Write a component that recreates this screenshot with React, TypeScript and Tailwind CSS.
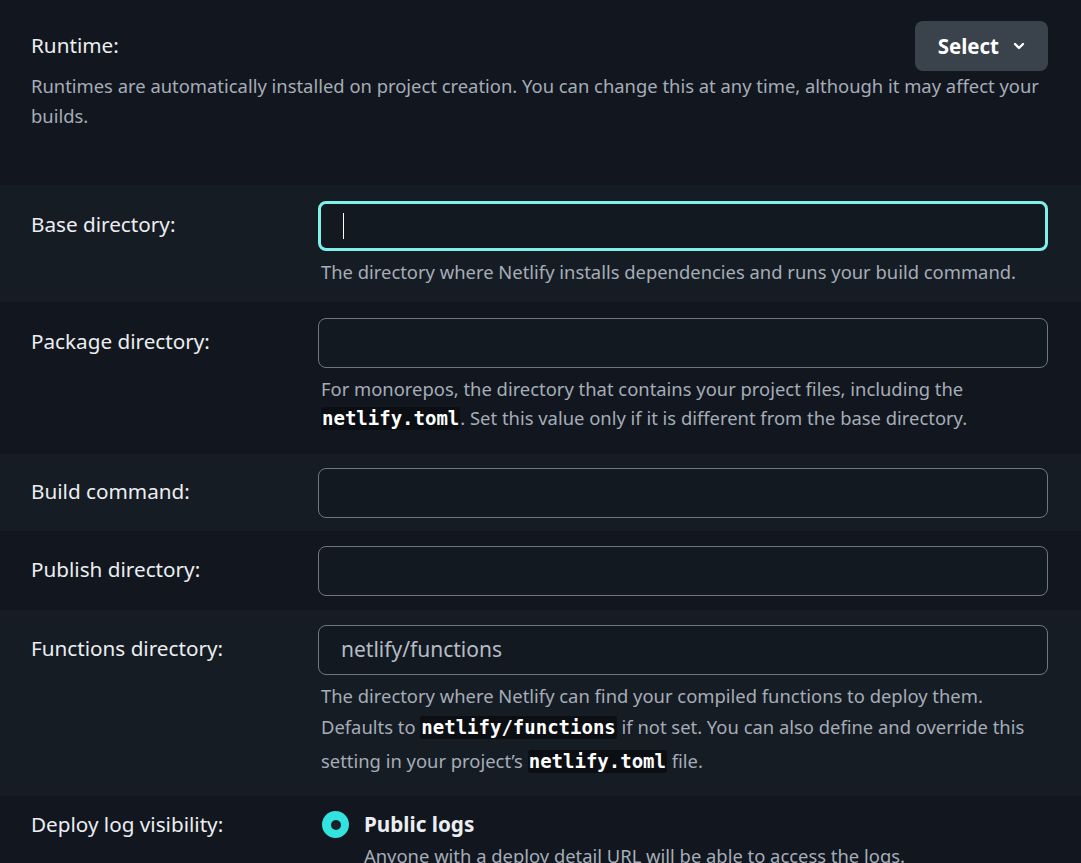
import { ChevronDown } from "lucide-react";
import type { ReactNode } from "react";

const SANS = "font-['Noto_Sans','Open_Sans',sans-serif]";

function Code({ children }: { children: ReactNode }) {
  return (
    <code className="inline-block rounded-[3px] bg-[#0b0e12] px-[1px] font-['DejaVu_Sans_Mono',monospace] text-[19px] font-bold leading-[23px] text-white">
      {children}
    </code>
  );
}

function Field({
  label,
  value,
  focused,
  hint,
  tinted,
  className,
}: {
  label: string;
  value?: string;
  focused?: boolean;
  hint?: ReactNode;
  tinted?: boolean;
  className: string;
}) {
  return (
    <div className={`grid grid-cols-[287px_730px] pl-[31px] ${tinted ? "bg-[#161c24]" : "bg-[#12171f]"} ${className}`}>
      <div className="text-[20.7px] leading-[46px] text-[#eceef1]">{label}</div>
      <div>
        <div
          className={`flex h-[50px] items-center rounded-[8px] bg-[#131920] pl-[22px] ${
            focused ? "border-[3px] border-[#7ff0ea] pl-[20px]" : "border border-[#6e7782]"
          }`}
        >
          {focused && <span className="h-[26px] w-[1px] bg-white" />}
          {value && <span className="text-[21px] text-[#b5bcc5]">{value}</span>}
        </div>
        {hint}
      </div>
    </div>
  );
}

const hintCls = "pl-[3px] text-[18.4px] text-[#a5adb7]";

export default function App() {
  return (
    <div className={`min-h-[863px] w-[1081px] overflow-hidden bg-[#12171f] ${SANS}`}>
      {/* Runtime */}
      <section className="pl-[31px] pr-[33px] pt-[21px] pb-[54px]">
        <div className="flex items-center justify-between">
          <span className="text-[20.7px] text-[#eceef1]">Runtime:</span>
          <button className="flex h-[50px] items-center gap-[12px] rounded-[8px] bg-[#3a424c] pl-[23px] pr-[21px] text-[20.5px] font-bold text-white">
            Select
            <ChevronDown size={16} strokeWidth={3.5} />
          </button>
        </div>
        <p className="text-[18.4px] leading-[30px] text-[#a5adb7]">
          Runtimes are automatically installed on project creation. You can change this at any time, although it may affect your
          <br />
          builds.
        </p>
      </section>

      <Field
        tinted
        focused
        label="Base directory:"
        className="pt-[16px] pb-[15px]"
        hint={
          <p className={`mt-[6px] leading-[30px] ${hintCls}`}>
            The directory where Netlify installs dependencies and runs your build command.
          </p>
        }
      />
      <Field
        label="Package directory:"
        className="pt-[16px] pb-[22px]"
        hint={
          <p className={`mt-[6px] leading-[29px] ${hintCls}`}>
            For monorepos, the directory that contains your project files, including the
            <br />
            <Code>netlify.toml</Code>. Set this value only if it is different from the base directory.
          </p>
        }
      />
      <Field tinted label="Build command:" className="pt-[14px] pb-[13px]" />
      <Field label="Publish directory:" className="pt-[15px] pb-[14px]" />
      <Field
        tinted
        label="Functions directory:"
        value="netlify/functions"
        className="pt-[15px] pb-[18px]"
        hint={
          <div className={hintCls}>
            <div className="mt-[6px] leading-[30px]">
              The directory where Netlify can find your compiled functions to deploy them.
            </div>
            <div className="leading-[32px]">
              Defaults to <Code>netlify/functions</Code> if not set. You can also define and override this
            </div>
            <div className="leading-[35px]">
              setting in your project’s <Code>netlify.toml</Code> file.
            </div>
          </div>
        }
      />

      {/* Deploy log visibility */}
      <section className="grid grid-cols-[287px_730px] pl-[31px] pt-[14px]">
        <div className="text-[20.7px] leading-[28px] text-[#eceef1]">Deploy log visibility:</div>
        <div className="flex gap-[15px] pl-[4px]">
          <span className="mt-[1px] flex h-[27px] w-[27px] shrink-0 items-center justify-center rounded-full bg-[#32e3df]">
            <span className="h-[10px] w-[10px] rounded-full bg-[#1a2129]" />
          </span>
          <div>
            <div className="text-[20.7px] font-bold leading-[28px] text-[#eceef1]">Public logs</div>
            <div className="mt-[3px] text-[18.4px] leading-[30px] text-[#a5adb7]">
              Anyone with a deploy detail URL will be able to access the logs.
            </div>
          </div>
        </div>
      </section>
    </div>
  );
}
